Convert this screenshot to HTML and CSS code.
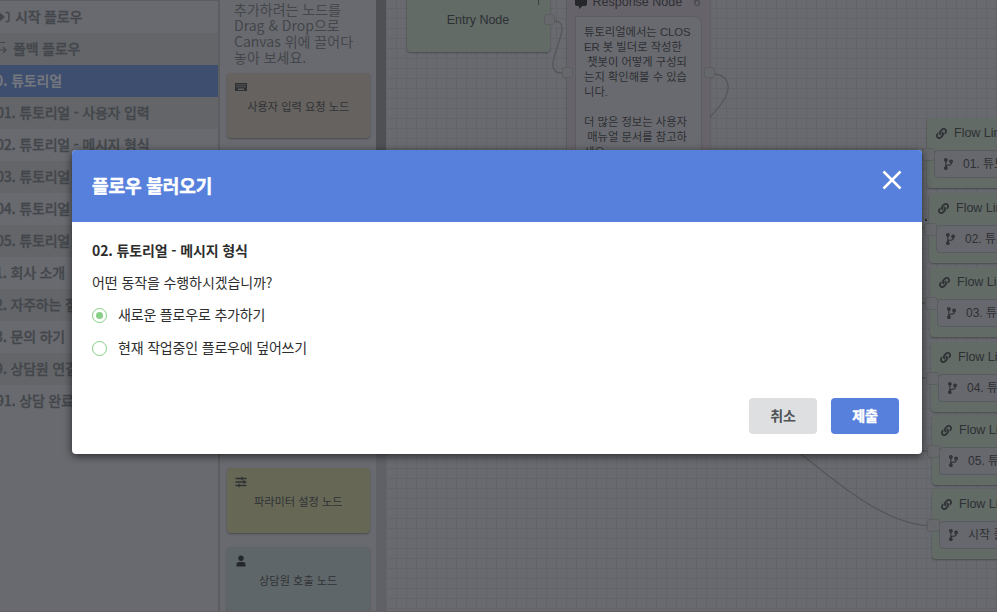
FILE: index.html
```html
<!DOCTYPE html>
<html lang="ko">
<head>
<meta charset="utf-8">
<title>플로우 불러오기</title>
<link rel="stylesheet" href="styles.css">
</head>
<body>
<svg class="defs" aria-hidden="true">
  <symbol id="link" viewBox="0 0 512 512"><path d="M326.6 185.4c59.7 59.8 58.9 155.7.4 214.6-.1.1-.3.3-.4.4l-67.2 67.2c-59.3 59.3-155.7 59.3-215 0-59.3-59.3-59.3-155.7 0-215l37.1-37.1c9.8-9.8 26.8-3.3 27.3 10.6.6 17.7 3.8 35.5 9.7 52.7 2 5.8.6 12.3-3.8 16.6l-13.1 13.1c-28 28-28.9 73.7-1.2 102 28 28.6 74.1 28.7 102.3.5l67.2-67.2c28.2-28.2 28.1-73.8 0-101.8-3.7-3.7-7.4-6.6-10.3-8.6a16 16 0 0 1-6.9-12.6c-.4-10.6 3.3-21.5 11.7-29.8l21.1-21.1c5.5-5.5 14.2-6.2 20.6-1.7a152.500 152.500 0 0 1 20.500 17.200zM467.500 44.400c-59.300-59.300-155.700-59.300-215 0l-67.200 67.200c-.1.1-.3.300-.4.4-58.600 58.900-59.400 154.800.4 214.600a152.500 152.500 0 0 0 20.500 17.200c6.400 4.500 15.100 3.800 20.600-1.700l21.100-21.100c8.400-8.400 12.100-19.200 11.700-29.800a16 16 0 0 0-6.900-12.600c-2.900-2-6.600-4.900-10.300-8.600-28.100-28.100-28.200-73.600 0-101.800l67.200-67.200c28.200-28.200 74.300-28.100 102.300.5 27.800 28.300 26.900 73.900-1.200 102l-13.100 13.100c-4.400 4.400-5.800 10.800-3.800 16.600 5.900 17.200 9 35 9.700 52.700.5 13.900 17.500 20.400 27.300 10.600l37.100-37.100c59.300-59.300 59.300-155.700 0-215z"/></symbol>
  <symbol id="branch" viewBox="0 0 384 512"><path d="M384 144c0-44.200-35.800-80-80-80s-80 35.800-80 80c0 36.400 24.300 67.100 57.500 76.800-.6 16.100-4.200 28.500-11 36.900-15.400 19.200-49.300 22.400-85.200 25.700-28.200 2.600-57.400 5.400-81.300 16.900v-144c32.500-10.200 56-40.500 56-76.300 0-44.200-35.800-80-80-80S0 35.800 0 80c0 35.800 23.500 66.100 56 76.300v199.300C23.500 365.900 0 396.200 0 432c0 44.200 35.800 80 80 80s80-35.800 80-80c0-34-21.200-63.100-51.200-74.600 3.100-5.200 7.800-9.800 14.900-13.400 16.200-8.200 40.400-10.400 66.100-12.800 42.200-3.900 90-8.400 118.200-43.400 14-17.400 21.100-39.800 21.600-67.900 31.600-10.800 54.400-40.700 54.400-75.900zM80 64c8.800 0 16 7.200 16 16s-7.200 16-16 16-16-7.200-16-16 7.200-16 16-16zm0 384c-8.800 0-16-7.200-16-16s7.200-16 16-16 16 7.200 16 16-7.200 16-16 16zm224-320c8.800 0 16 7.200 16 16s-7.200 16-16 16-16-7.200-16-16 7.200-16 16-16z"/></symbol>
</svg>

<div class="app">
  <nav class="flows">
    <div class="flow"><svg class="enter" viewBox="0 0 14 12"><path d="M0 4h3V1l6 5-6 5V8H0z" fill="currentColor"/><path d="M9.500 1.500h2q1.500 0 1.500 1.500v6q0 1.500-1.500 1.500h-2" fill="none" stroke="currentColor" stroke-width="1.500"/></svg><span>시작 플로우</span></div>
    <div class="flow"><svg class="fallback" viewBox="0 0 12 14"><path d="M0 1.500h10M0 9h11M8 6l3 3-3 3" fill="none" stroke="currentColor" stroke-width="1.200"/></svg><span>폴백 플로우</span></div>
    <div class="flow active"><span class="one">0. 튜토리얼</span></div>
    <div class="flow"><span class="two">01. 튜토리얼 - 사용자 입력</span></div>
    <div class="flow"><span class="two">02. 튜토리얼 - 메시지 형식</span></div>
    <div class="flow"><span class="two">03. 튜토리얼</span></div>
    <div class="flow"><span class="two">04. 튜토리얼</span></div>
    <div class="flow"><span class="two">05. 튜토리얼</span></div>
    <div class="flow"><span class="one">1. 회사 소개</span></div>
    <div class="flow"><span class="one">2. 자주하는 질문</span></div>
    <div class="flow"><span class="one">3. 문의 하기</span></div>
    <div class="flow"><span class="one">9. 상담원 연결</span></div>
    <div class="flow"><span class="two">91. 상담 완료</span></div>
  </nav>

  <aside class="palette">
    <p class="hint">추가하려는 노드를<br>Drag &amp; Drop으로<br>Canvas 위에 끌어다<br>놓아 보세요.</p>
    <div class="card input"><svg viewBox="0 0 12 12"><path d="M0 2h12v8H0z" fill="#2e3034"/><path d="M1.500 3.800h9M1.500 5.800h9" stroke="#797a78" stroke-dasharray="1 1"/><path d="M3 8.200h6" stroke="#797a78"/></svg><span>사용자 입력 요청 노드</span></div>
    <div class="card param"><svg viewBox="0 0 12 12"><path d="M.5 2.500h11M.5 6h11M.5 9.500h11M7 .8v3.400M9 4.300v3.400M4 7.800v3.400" fill="none" stroke="#2e3034" stroke-width="1.300"/></svg><span>파라미터 설정 노드</span></div>
    <div class="card agent"><svg viewBox="0 0 12 12"><circle cx="6" cy="3.200" r="2.700" fill="#25282b"/><path d="M1.500 11.500V9.500Q1.500 7 4 7h4q2.500 0 2.500 2.500v2z" fill="#25282b"/></svg><span>상담원 호출 노드</span></div>
  </aside>
  <div class="scroll"><div class="thumb"></div></div>

  <main class="canvas">
    <svg class="edges" viewBox="0 0 611 612">
      <path d="M168 21C193 21 149 73 176 73M326 74C340 74 343 83 342 89C341 98 332 109 323 118M415 454C452 484 500 524 542 525.500M530 153h10M530 228h12M530 303h12M530 378h12M530 451h12"/>
    </svg>
    <section class="node entry">Entry Node<i></i></section>
    <section class="node response">
      <header><svg viewBox="0 0 12 12"><path d="M2 0h8q2 0 2 2v5q0 2-2 2H7.500L4 12V9H2Q0 9 0 7V2Q0 0 2 0z"/></svg><span>Response Node</span><b>6</b></header>
      <div class="bubble">튜토리얼에서는 CLOS
ER 봇 빌더로 작성한
 챗봇이 어떻게 구성되
는지 확인해볼 수 있습
니다.

더 많은 정보는 사용자
 매뉴얼 문서를 참고하
세요.</div>
    </section>
    <section class="node link l1"><header><svg><use href="#link"/></svg>Flow Link</header><div class="target"><svg><use href="#branch"/></svg>01. 튜토리얼</div></section>
    <section class="node link l2"><header><svg><use href="#link"/></svg>Flow Link</header><div class="target"><svg><use href="#branch"/></svg>02. 튜토리얼</div></section>
    <section class="node link l3"><header><svg><use href="#link"/></svg>Flow Link</header><div class="target"><svg><use href="#branch"/></svg>03. 튜토리얼</div></section>
    <section class="node link l4"><header><svg><use href="#link"/></svg>Flow Link</header><div class="target"><svg><use href="#branch"/></svg>04. 튜토리얼</div></section>
    <section class="node link l5"><header><svg><use href="#link"/></svg>Flow Link</header><div class="target"><svg><use href="#branch"/></svg>05. 튜토리얼</div></section>
    <section class="node link l6"><header><svg><use href="#link"/></svg>Flow Link</header><div class="target"><svg><use href="#branch"/></svg>시작 플로우</div></section>
    <i class="port p-entry"></i><i class="port p-in"></i><i class="port p-out"></i>
    <i class="dot"></i>
  </main>
</div>

<div class="modal" role="dialog">
  <header class="modal-head"><h1>플로우 불러오기</h1><svg viewBox="0 0 20 20"><path d="M1.500 1.500l17 17M18.500 1.500l-17 17"/></svg></header>
  <div class="modal-body">
    <h2>02. 튜토리얼 - 메시지 형식</h2>
    <p>어떤 동작을 수행하시겠습니까?</p>
    <div class="option"><i class="radio on"></i><span>새로운 플로우로 추가하기</span></div>
    <div class="option"><i class="radio"></i><span>현재 작업중인 플로우에 덮어쓰기</span></div>
  </div>
  <footer class="modal-foot"><div class="btn cancel">취소</div><div class="btn submit">제출</div></footer>
</div>
</body>
</html>
```
FILE: styles.css
```css
* { box-sizing: border-box; }
body {
  margin: 0;
  width: 997px;
  height: 612px;
  overflow: hidden;
  background: #696a6f;
  font: 14px/16px "Noto Sans CJK KR", sans-serif;
  color: #393b3f;
}
.defs { position: absolute; width: 0; height: 0; }
.app { display: flex; height: 612px; overflow: hidden; border-bottom: 1px solid #645f66; }

.flows { flex: none; width: 220px; border-right: 2px solid #5c5d61; border-top: 1px solid #5d5e62; }
.flow {
  display: flex;
  align-items: center;
  height: 32px;
  padding-bottom: 2px;
  overflow: hidden;
  white-space: nowrap;
  font-weight: 500;
  letter-spacing: -.2px;
  color: #43474b;
  -webkit-text-stroke: .3px currentColor;
}
.flow:nth-child(even) { background: #646569; }
.flow.active { background: #3e4e6f; color: #74777d; font-weight: 700; -webkit-text-stroke: 0; }
.flow svg { flex: none; }
.enter { width: 14px; height: 12px; margin: 2px 5px 0 -4px; }
.fallback { width: 12px; height: 14px; margin: 0 6px 0 -5px; }
.one { margin-left: -5px; }
.two { margin-left: -4px; }

.palette { flex: none; width: 156px; padding: 1px 6px 0; }
.hint { margin: 0 0 8px 8px; color: #43464a; }
.card {
  position: relative;
  display: flex;
  align-items: center;
  justify-content: center;
  height: 65px;
  margin: 0 0 14px .5px;
  border-radius: 4px;
  font-size: 11.200px;
  color: #303236;
  box-shadow: 0 1px 2px rgba(0, 0, 0, .3);
}
.card svg { position: absolute; left: 8px; top: 8px; width: 12px; height: 12px; }
.input { background: #65625f; margin-bottom: 330px; }
.param { background: #666855; }
.agent { background: #5f6669; }

.scroll { flex: none; width: 10px; background: #606166; }
.thumb { height: 300px; background: #4f5054; }

.canvas {
  position: relative;
  flex: 1;
  overflow: hidden;
  background-color: #696a6f;
  background-image: linear-gradient(#636468 1px, transparent 1px), linear-gradient(90deg, #636468 1px, transparent 1px);
  background-size: 10px 10px;
  background-position: 0 8px;
  font: 12.500px/16px "Liberation Sans", "Noto Sans CJK KR", sans-serif;
  color: #2e3034;
}
.edges { position: absolute; inset: 0; width: 611px; height: 612px; fill: none; stroke: #55565a; stroke-width: 1.300; }
.node { position: absolute; border-radius: 4px; box-shadow: 0 1px 2px rgba(0, 0, 0, .3); }
.entry { left: 20.500px; top: -20px; width: 143px; height: 72px; padding-top: 32px; text-align: center; background: #626b66; }
.entry i { position: absolute; right: 11px; top: 20px; width: 1px; height: 5px; background: #3c4040; }
.response { left: 180.500px; top: -20px; width: 143px; height: 220px; padding: 14px 8px 0; background: #67636a; }
.response header { display: flex; height: 22px; line-height: 16px; }
.response header svg { width: 12px; height: 12px; margin: 3px 6px 0 0; fill: #25272b; }
.response header b { margin-left: auto; margin-right: 1px; font-weight: 400; color: #45474b; }
.bubble {
  height: 180px;
  padding: 8px 8.500px;
  border: 1px solid #5c5d62;
  border-radius: 0 8px 0 0;
  background: #696a6f;
  font-size: 11.300px;
  line-height: 15px;
  white-space: pre;
}
.link { width: 143px; height: 70px; padding: 7px 7px 6px; background: #626b66; }
.link header { display: flex; align-items: center; height: 16px; }
.link header svg { width: 11px; height: 11px; margin: 0 7px 0 2px; fill: #2e3034; }
.target {
  display: flex;
  align-items: center;
  height: 28px;
  margin-top: 9px;
  padding-left: 9px;
  border: 1px solid #585b5f;
  border-radius: 4px;
  background: #67686d;
  font-size: 12px;
  white-space: nowrap;
}
.target svg { width: 9px; height: 12px; margin-right: 10px; fill: #2e3034; }
.port, .link::before {
  content: "";
  position: absolute;
  width: 11px;
  height: 11px;
  border: 1px solid #5c5d61;
  border-radius: 3px;
  background: #67686c;
}
.link::before { left: -5px; top: 30px; }
.p-entry { left: 158px; top: 14px; }
.p-in { left: 176px; top: 67px; }
.p-out { left: 318px; top: 67px; }
.dot { position: absolute; left: 539px; top: 219px; width: 2px; height: 2px; background: #303236; }
.l1 { left: 541px; top: 118px; }
.l2 { left: 543px; top: 193px; }
.l3 { left: 544px; top: 267px; }
.l4 { left: 545px; top: 342px; }
.l5 { left: 546px; top: 415px; }
.l6 { left: 546px; top: 489px; }

.modal {
  position: absolute;
  left: 72px;
  top: 150px;
  width: 850px;
  height: 304px;
  border-radius: 4px;
  overflow: hidden;
  background: #fff;
  color: #2d2d2d;
  box-shadow: 0 2px 8px rgba(0, 0, 0, .6);
}
.modal-head { display: flex; justify-content: space-between; height: 72px; padding: 20px; background: #5780dc; }
.modal-head h1 { margin: 0; font-size: 18px; line-height: 30px; font-weight: 700; letter-spacing: -.1px; color: #fff; -webkit-text-stroke: .5px #fff; }
.modal-head svg { width: 20px; height: 20px; fill: none; stroke: #fff; stroke-width: 2.500; }
.modal-body { height: 162px; padding: 20px 20px 0; letter-spacing: -.1px; }
.modal-body h2 { margin: 0 0 16px; font-size: 14px; line-height: 16px; font-weight: 700; letter-spacing: -.12px; }
.modal-body p { margin: 0 0 16px; }
.option { display: flex; align-items: center; height: 17px; margin-bottom: 16px; letter-spacing: -.18px; }
.option span { margin-top: -2px; }
.radio { display: flex; width: 15px; height: 15px; margin: 1px 11px 0 0; border: 1px solid #86cf87; border-radius: 50%; }
.radio.on::after { content: ""; width: 7px; height: 7px; margin: auto; border-radius: 50%; background: #86cf87; }
.modal-foot { display: flex; justify-content: flex-end; gap: 14px; padding: 14px 23px 0; }
.btn { width: 68px; height: 36px; border-radius: 4px; text-align: center; line-height: 34px; font-weight: 700; letter-spacing: -.2px; }
.cancel { background: #dedfe1; color: #505357; }
.submit { background: #5780dc; color: #fff; -webkit-text-stroke: .4px #fff; }
```
